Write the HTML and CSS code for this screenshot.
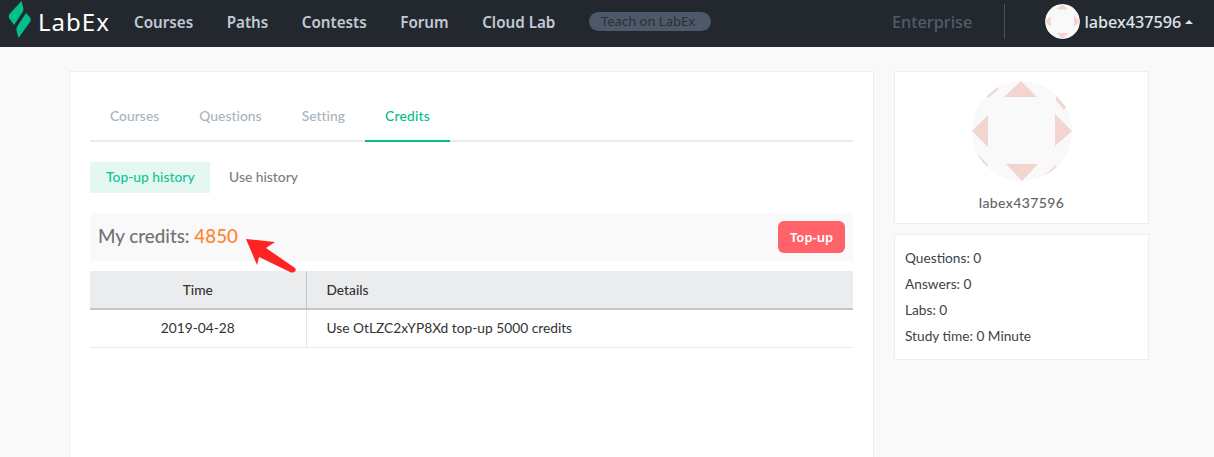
FILE: index.html
```html
<!DOCTYPE html>
<html lang="en">
<head>
<meta charset="utf-8">
<title>LabEx</title>
<link rel="stylesheet" href="styles.css">
</head>
<body>
<header class="nav">
  <a class="logo">
    <svg class="logo-mark" width="24" height="38" viewBox="0 0 24 38"><path fill="#00c08b" d="M13.500 0 L15.500 8 Q15.500 10 14 12 L6 24 L1 17 Q0 15 1.500 13 Z"/><path fill="#00c08b" d="M18 12 L22.500 17 Q23.500 19 22 21 L10.500 37 L8.500 29 Q8 27 9.500 25 Z"/></svg>
    <span class="logo-text">LabEx</span>
  </a>
  <nav class="nav-links">
    <a>Courses</a><a>Paths</a><a>Contests</a><a>Forum</a><a>Cloud Lab</a>
  </nav>
  <span class="teach">Teach on LabEx</span>
  <a class="enterprise">Enterprise</a>
  <span class="nav-divider"></span>
  <div class="user">
    <svg class="avatar-small" width="35" height="35" viewBox="0 0 100 100"><use href="#avatar"/></svg>
    <span class="user-name">labex437596</span>
    <span class="caret"></span>
  </div>
</header>

<svg class="defs" width="0" height="0">
  <defs>
    <clipPath id="circle"><circle cx="50" cy="50" r="50"/></clipPath>
    <g id="avatar" clip-path="url(#circle)">
      <rect width="100" height="100" fill="#f9f9f9"/>
      <g fill="#f2d5cf">
        <path d="M49 0 L32 16 L65 16 Z"/>
        <path d="M0 50 L16 34 L16 66 Z"/>
        <path d="M100 50 L83 33 L83 65 Z"/>
        <path d="M50 100 L34 83 L66 83 Z"/>
        <path d="M26 6 L15 15 L16 17 L26 9 Z"/>
        <path d="M84 15 L94 26 L92 29 L84 19 Z"/>
        <path d="M5 72 L16 84 L15 86 L7 78 Z"/>
        <path d="M84 84 L72 95 L75 95 L85 87 Z"/>
      </g>
    </g>
  </defs>
</svg>

<main class="page">
  <section class="panel">
    <div class="tabs">
      <a class="tab">Courses</a>
      <a class="tab">Questions</a>
      <a class="tab">Setting</a>
      <a class="tab tab-active">Credits</a>
    </div>
    <div class="subtabs">
      <a class="subtab subtab-active">Top-up history</a>
      <a class="subtab">Use history</a>
    </div>
    <div class="credits-bar">
      <div class="credits">My credits: <span class="credits-num">4850</span></div>
      <svg class="arrow" width="52" height="40" viewBox="0 0 52 40"><path fill="#ff2421" d="M1 1 L30 4 L21 10 L50 30 Q52 33 49 34 Q47 35 45 34 L14 19 L12 27 Z"/></svg>
      <button class="topup">Top-up</button>
    </div>
    <table class="history">
      <thead>
        <tr><th class="col-time">Time</th><th class="col-details">Details</th></tr>
      </thead>
      <tbody>
        <tr><td class="col-time">2019-04-28</td><td class="col-details">Use OtLZC2xYP8Xd top-up 5000 credits</td></tr>
      </tbody>
    </table>
  </section>
  <aside class="side">
    <div class="card profile">
      <svg class="avatar-large" width="100" height="100" viewBox="0 0 100 100"><use href="#avatar"/></svg>
      <div class="profile-name">labex437596</div>
    </div>
    <div class="card stats">
      <div>Questions: 0</div>
      <div>Answers: 0</div>
      <div>Labs: 0</div>
      <div>Study time: 0 Minute</div>
    </div>
  </aside>
</main>
</body>
</html>
```
FILE: styles.css
```css
* { box-sizing: border-box; }
html, body { margin: 0; height: 100%; overflow: hidden; }
body { background: #f9f9f9; font-family: Lato, "Liberation Sans", sans-serif; color: #333; }

.nav { height: 47px; background: #23282f; display: flex; align-items: center; padding: 0 0 4px 8px; }
.logo { display: flex; align-items: center; width: 126px; }
.logo-mark { flex: none; margin-top: -3px; }
.logo-text { font-family: "Noto Sans", sans-serif; font-size: 24px; color: #fff; margin-left: 6px; letter-spacing: 1px; }
.nav-links { display: flex; gap: 33.500px; width: 455px; }
.nav-links a { font-family: "Noto Sans", sans-serif; font-weight: 600; font-size: 15.200px; color: #c1c9d3; }
.teach { width: 122px; height: 19px; padding-right: 4px; border-radius: 10px; background: #4d5868; color: #2a3038; font-family: "Noto Sans", sans-serif; font-size: 13px; line-height: 19px; text-align: center; }
.enterprise { margin-left: 181px; font-family: "Noto Sans", sans-serif; font-size: 16.300px; font-weight: 500; color: #515c6a; }
.nav-divider { width: 1px; height: 35px; background: #4a5360; margin-left: 32px; }
.user { display: flex; align-items: center; margin-left: 40px; }
.avatar-small { border-radius: 50%; }
.user-name { margin-left: 4px; font-family: "Noto Sans", sans-serif; font-size: 16.200px; font-weight: 500; color: #dfe4ea; }
.caret { margin-left: 4px; width: 0; height: 0; border: 4px solid transparent; border-top: 0; border-bottom: 4px solid #dfe4ea; }
.defs { position: absolute; }

.page { display: flex; align-items: flex-start; gap: 20px; padding: 24px 65px 0 69px; height: calc(100vh - 47px); }
.panel { width: 805px; height: 386px; background: #fff; border: 1px solid #eeeeee; border-bottom: 0; padding: 20px; flex: none; }
.tabs { display: flex; height: 50px; border-bottom: 2px solid #e8ecf0; }
.tab { padding: 15px 20px 0; height: 50px; font-size: 13.800px; font-weight: 500; color: #a9b3bb; line-height: 17px; border-bottom: 2px solid transparent; letter-spacing: .05px; }
.tab-active { color: #00bd8b; border-bottom-color: #00bd8b; letter-spacing: .25px; }
.subtabs { display: flex; margin-top: 20px; }
.subtab { height: 31px; line-height: 29px; padding: 0 16px; font-size: 13.850px; font-weight: 500; color: #7d7d7d; width: 120px; white-space: nowrap; }
.subtab:not(.subtab-active) { padding-left: 19px; }
.subtab-active { background: #e4f7f1; color: #11c596; }
.credits-bar { position: relative; display: flex; align-items: center; justify-content: space-between; height: 48px; margin-top: 20px; padding: 0 8px; background: #f9f9f9; }
.credits { font-size: 18.800px; color: #6f7278; font-weight: 500; margin-bottom: 3px; }
.credits-num { color: #ff8533; }
.arrow { position: absolute; left: 155px; top: 25px; }
.topup { width: 67px; height: 32px; border: 0; border-radius: 6px; background: #ff6268; color: #fff; font-family: "Noto Sans", sans-serif; font-size: 13px; font-weight: 600; padding: 0; }
.history { width: 100%; margin-top: 10px; border-collapse: collapse; table-layout: fixed; font-size: 13.750px; color: #333; }
.history th { height: 38px; background: #ebecee; font-weight: 500; border-bottom: 2px solid #c3c6ca; }
.history td { height: 38px; padding-bottom: 3px; border-bottom: 1px solid #e9eaec; }
.col-time { width: 216px; text-align: center; }
.col-details { text-align: left; padding-left: 20px; border-left: 1px solid #e4e5e7; }
th.col-details { border-left-color: #c3c6ca; }

.side { width: 255px; display: flex; flex-direction: column; gap: 10px; flex: none; }
.card { background: #fff; border: 1px solid #eeeeee; }
.profile { height: 153px; padding-top: 9px; display: flex; flex-direction: column; align-items: center; }
.profile-name { margin-top: 13px; font-size: 14px; font-weight: 500; color: #5f6368; letter-spacing: .4px; }
.stats { height: 126px; padding: 10px 10px 0; font-size: 13.700px; line-height: 26px; color: #3d4248; }
```
